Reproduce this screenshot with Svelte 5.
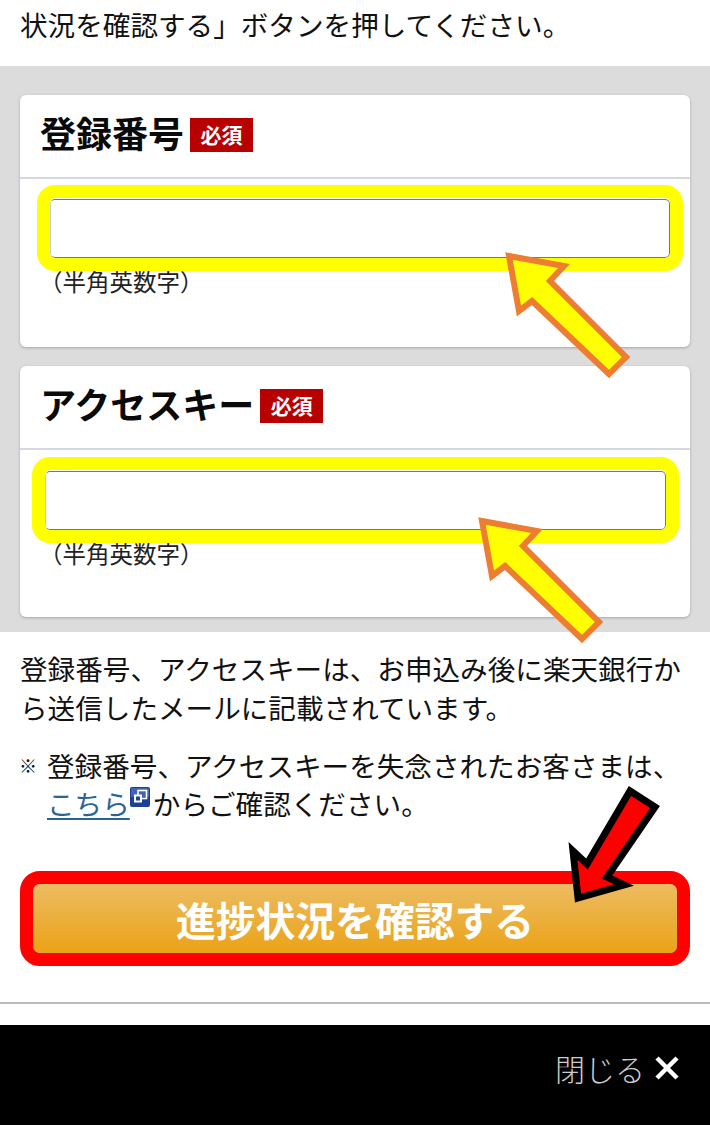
<script>
  const fields = [
    { title: '登録番号', mark: 'first' },
    { title: 'アクセスキー', mark: 'second' }
  ];
</script>

<div class="page">
  <p class="lead">状況を確認する」ボタンを押してください。</p>

  <section class="panel">
    {#each fields as f}
      <div class="card">
        <div class="card-head">
          <h2>{f.title}</h2>
          <span class="badge">必須</span>
        </div>
        <div class="card-body">
          <div class="field {f.mark}">
            <input type="text" aria-label={f.title} />
            <span class="mark"></span>
          </div>
          <div class="hint">（半角英数字）</div>
        </div>
      </div>
    {/each}
  </section>

  <section class="info">
    <p class="desc">登録番号、アクセスキーは、お申込み後に楽天銀行から送信したメールに記載されています。</p>
    <div class="note">
      <span class="kome">※</span>
      <p>登録番号、アクセスキーを失念されたお客さまは、<br /><a href="#top">こちら</a><svg class="ext" viewBox="0 0 20 20" aria-hidden="true"><rect width="20" height="20" rx="2" fill="#1d3f94" /><rect x="1" y="1" width="18" height="9" rx="1" fill="#3f63b5" /><rect x="8" y="3.5" width="8.5" height="8" fill="none" stroke="#fff" stroke-width="1.6" /><rect x="4" y="7.5" width="8" height="8" fill="#fff" /><rect x="6" y="9.5" width="4" height="4" fill="#1d3f94" /></svg>からご確認ください。</p>
    </div>
    <button class="submit" type="button">進捗状況を確認する</button>
  </section>

  <hr />

  <footer>
    <span class="close">閉じる</span>
    <svg class="x" viewBox="0 0 26 26" aria-hidden="true"><path d="M3 3 L23 23 M23 3 L3 23" stroke="#fff" stroke-width="4.5" fill="none" /></svg>
  </footer>

  <svg class="overlay" viewBox="0 0 710 1125" aria-hidden="true">
    <polygon class="yellow" points="509,256 564,266 550,281 626,357 609,374 532,301 519,311" />
    <polygon class="yellow" points="482,521 537,531 523,546 599,622 582,639 505,566 492,576" />
    <polygon class="red" points="578,898 573,851 587,864 630,791 655,807 607,877 624,885" />
  </svg>
</div>

<style>
  :global(body) {
    margin: 0;
    background: #fff;
  }
  .page {
    position: relative;
    width: 710px;
    height: 1125px;
    overflow: hidden;
    display: flex;
    flex-direction: column;
    font-family: "Noto Sans CJK JP", "Noto Sans", sans-serif;
    color: #111;
  }
  .lead {
    margin: 0;
    height: 66px;
    box-sizing: border-box;
    padding: 4px 0 0 20px;
    font-size: 27.6px;
    line-height: 40px;
  }
  .panel {
    background: #dcdcdc;
    height: 566px;
    box-sizing: border-box;
    padding: 29px 20px 0;
    display: flex;
    flex-direction: column;
    gap: 19px;
  }
  .card {
    height: 252px;
    background: #fff;
    border-radius: 6px;
    box-shadow: 0 1px 3px rgba(0, 0, 0, 0.25);
    display: flex;
    flex-direction: column;
  }
  .card:last-child {
    height: 251px;
  }
  .card-head {
    height: 84px;
    box-sizing: border-box;
    border-bottom: 2px solid #d5d7e2;
    display: flex;
    align-items: center;
    gap: 7px;
    padding: 0 0 2px 20px;
  }
  h2 {
    margin: -7px 0 0;
    font-size: 36px;
    line-height: 44px;
    font-weight: 700;
    color: #0a0a0a;
  }
  .badge {
    width: 63px;
    height: 34px;
    margin-left: -1px;
    background: #b80000;
    color: #fff;
    font-size: 21px;
    font-weight: 700;
    line-height: 32px;
    text-align: center;
  }
  .card-body {
    padding: 20px 20px 0 30px;
  }
  .field {
    position: relative;
    height: 59px;
  }
  .field input {
    display: block;
    width: 100%;
    height: 59px;
    box-sizing: border-box;
    padding: 0;
    background: #fff;
    border: 1px solid #777;
    border-left-color: #ccc;
    border-radius: 5px;
  }
  .mark {
    position: absolute;
    inset: -14px -13px -13px -13px;
    border: 13px solid #ffff00;
    border-radius: 18px;
  }
  .second {
    top: 1px;
    left: -5px;
    margin-right: -1px;
  }
  .hint {
    margin-top: 8px;
    margin-left: -11px;
    font-size: 23.5px;
    line-height: 30px;
    color: #222;
  }
  .second + .hint {
    margin-top: 9px;
  }
  .info {
    padding: 17px 20px 0;
    display: flex;
    flex-direction: column;
  }
  .desc {
    margin: 0;
    font-size: 27.6px;
    line-height: 38.5px;
  }
  .note {
    display: flex;
    margin-top: 21px;
  }
  .kome {
    width: 27px;
    flex: none;
    font-size: 18px;
    font-weight: 700;
    line-height: 37.5px;
    margin-left: -1px;
    margin-right: 1px;
  }
  .note p {
    margin: 0;
    font-size: 27.6px;
    line-height: 37.5px;
    white-space: nowrap;
  }
  .note a {
    color: #2a6496;
    text-decoration: underline;
    text-underline-offset: 3px;
  }
  .ext {
    width: 20px;
    height: 20px;
    vertical-align: 8px;
    margin-right: 3px;
  }
  .submit {
    margin-top: 49px;
    height: 95px;
    box-sizing: border-box;
    border: 13px solid #ff0000;
    border-radius: 20px;
    background: linear-gradient(#ecbb62, #eba317);
    background-clip: padding-box;
    color: #fff;
    font-family: inherit;
    font-size: 39.8px;
    font-weight: 700;
    padding: 0;
  }
  hr {
    margin: 36px 0 0;
    border: 0;
    border-top: 2px solid #bbb;
  }
  footer {
    margin-top: 21px;
    flex: 1;
    background: #000;
    display: flex;
    align-items: center;
    justify-content: flex-end;
    gap: 9px;
    padding: 0 30px 14px 0;
  }
  .close {
    color: #ccc;
    font-size: 30px;
    font-weight: 300;
    line-height: 40px;
  }
  .x {
    width: 26px;
    height: 26px;
  }
  .overlay {
    position: absolute;
    inset: 0;
    width: 710px;
    height: 1125px;
    pointer-events: none;
  }
  .yellow {
    fill: #ffff00;
    stroke: #ed7d31;
    stroke-width: 6;
  }
  .red {
    fill: #ff0000;
    stroke: #000;
    stroke-width: 7;
  }
</style>
